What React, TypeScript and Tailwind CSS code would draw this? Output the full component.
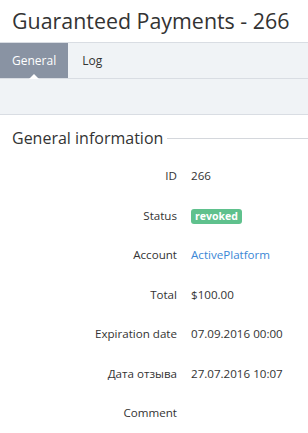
import React from "react";

const rows: { label: string; value: React.ReactNode }[] = [
  { label: "ID", value: "266" },
  {
    label: "Status",
    value: (
      <span className="inline-block h-[15px] rounded-[3px] bg-[#5fc18d] px-[4px] text-[10.5px] font-bold leading-[15px] text-white">
        revoked
      </span>
    ),
  },
  { label: "Account", value: <a className="text-[#3b87d6]">ActivePlatform</a> },
  { label: "Total", value: "$100.00" },
  { label: "Expiration date", value: "07.09.2016 00:00" },
  { label: "Дата отзыва", value: "27.07.2016 10:07" },
  { label: "Comment", value: "" },
];

export default function App() {
  return (
    <div className="h-[433px] w-[308px] overflow-hidden bg-white font-['Open_Sans',sans-serif] text-[#333]">
      <h1 className="whitespace-nowrap px-3 pt-[6px] pb-[7px] text-[21.4px] leading-[29px] text-[#333]">
        Guaranteed Payments - 266
      </h1>

      <div className="flex h-[37px] border-y border-[#d9dde3] bg-[#f0f3f6]">
        <div className="relative flex items-center bg-[#8993a3] px-3 text-[12px] text-white">
          General
          <span className="absolute bottom-[-1px] left-1/2 h-0 w-0 -translate-x-1/2 border-x-[5px] border-b-[5px] border-x-transparent border-b-white" />
        </div>
        <div className="flex items-center px-[14px] text-[12px] text-[#333]">Log</div>
      </div>

      <div className="h-[36px] border-b border-[#d9dde3] bg-[#f0f3f6]" />

      <div className="flex items-center pt-[11px] pl-3">
        <span className="text-[16px] leading-[24px] text-[#333]">General information</span>
        <span className="ml-[4px] h-px flex-1 bg-[#d4d7dc]" />
      </div>

      <div className="pt-[18px]">
        {rows.map((r) => (
          <div key={r.label} className="flex h-[39.5px] items-start text-[11.6px] leading-[16px]">
            <div className="w-[178px] shrink-0 pr-[1px] text-right text-[#333]">{r.label}</div>
            <div className="pl-[13px] text-[#333]">{r.value}</div>
          </div>
        ))}
      </div>
    </div>
  );
}
